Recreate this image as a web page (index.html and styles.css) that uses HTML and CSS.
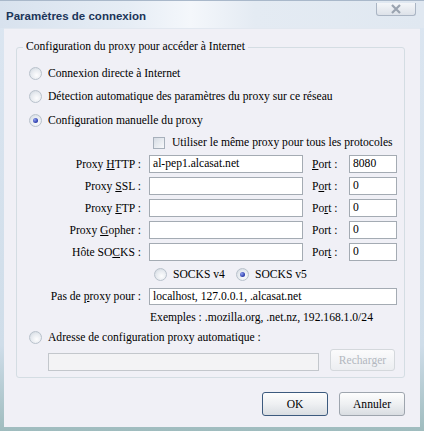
FILE: index.html
```html
<!DOCTYPE html>
<html lang="fr">
<head>
    <meta charset="UTF-8">
    <title>Paramètres de connexion</title>
    <link rel="stylesheet" href="styles.css">
</head>
<body>
<div class="window">
    <div class="titlebar">
        <span class="title">Paramètres de connexion</span>
        <span class="close">
            <svg width="14" height="10" viewBox="0 0 14 10"><path d="M3 1 L11 9 M11 1 L3 9" stroke="#9aa3b0" stroke-width="2.2" fill="none"/></svg>
        </span>
    </div>
    <div class="content">
        <fieldset class="group">
            <legend>Configuration du proxy pour accéder à Internet</legend>

            <div class="row r-a"><span class="radio"></span>Connexion directe à Internet</div>
            <div class="row r-b"><span class="radio"></span>Détection automatique des paramètres du proxy sur ce réseau</div>
            <div class="row r-c"><span class="radio checked"></span>Configuration manuelle du proxy</div>
            <div class="row r-check"><span class="checkbox"></span>Utiliser le même proxy pour tous les protocoles</div>

            <div class="row proxy-row">
                <span class="label">Proxy <u>H</u>TTP :</span>
                <span class="field host">al-pep1.alcasat.net</span>
                <span class="port-label"><u>P</u>ort :</span>
                <span class="field port">8080</span>
            </div>
            <div class="row proxy-row">
                <span class="label">Proxy <u>S</u>SL :</span>
                <span class="field host"></span>
                <span class="port-label">P<u>o</u>rt :</span>
                <span class="field port">0</span>
            </div>
            <div class="row proxy-row">
                <span class="label">Proxy <u>F</u>TP :</span>
                <span class="field host"></span>
                <span class="port-label">Po<u>r</u>t :</span>
                <span class="field port">0</span>
            </div>
            <div class="row proxy-row">
                <span class="label">Proxy <u>G</u>opher :</span>
                <span class="field host"></span>
                <span class="port-label">Port :</span>
                <span class="field port">0</span>
            </div>
            <div class="row proxy-row">
                <span class="label">Hôte SO<u>C</u>KS :</span>
                <span class="field host"></span>
                <span class="port-label">Por<u>t</u> :</span>
                <span class="field port">0</span>
            </div>

            <div class="row socks-row">
                <span class="socks-opt"><span class="radio"></span>SOCKS v4</span>
                <span class="socks-opt"><span class="radio checked"></span>SOCKS v5</span>
            </div>

            <div class="row noproxy-row">
                <span class="label">Pas de <u>p</u>roxy pour :</span>
                <span class="field wide">localhost, 127.0.0.1, .alcasat.net</span>
            </div>
            <div class="row examples">Exemples : .mozilla.org, .net.nz, 192.168.1.0/24</div>

            <div class="row r-auto"><span class="radio"></span>Adresse de configuration proxy automatique :</div>
            <div class="row auto-row">
                <span class="field auto disabled"></span>
                <span class="btn reload">Recharger</span>
            </div>
        </fieldset>

        <div class="actions">
            <span class="btn default">OK</span>
            <span class="btn">Annuler</span>
        </div>
    </div>
</div>
</body>
</html>
```

FILE: styles.css
```css
html, body { margin: 0; padding: 0; background: #fff; }
body { font-family: "Liberation Serif", "Times New Roman", serif; font-size: 11.6px; color: #000; }

.window { width: 424px; height: 431px; box-sizing: border-box; padding: 0 4px 4px; background: linear-gradient(to bottom, #dce6f1, #cfdde9 80%, #9fbcbe); border-top: 1px solid #a9b8ca; display: flex; flex-direction: column; }
.titlebar { height: 27px; display: flex; align-items: flex-start; justify-content: space-between; margin: 0 -4px; padding: 0 8px 0 6px; background: linear-gradient(to right, #d8e2ee 0%, #e6edf5 30%, #f4f7fb 45%, #e4ebf3 60%, #e0e8f1 100%); }
.title { font-family: "Liberation Sans", sans-serif; font-weight: bold; font-size: 11.5px; color: #1b3559; margin-top: 9px; }
.close { width: 40px; height: 13px; margin-top: 2px; box-sizing: border-box; border: 1px solid #aab5c4; border-top: none; border-radius: 0 0 3px 3px; background: linear-gradient(to bottom, #f4f6f9, #dde2e9); display: flex; align-items: center; justify-content: center; }

.content { flex: 1; background: #f0f0f6; padding: 11px 15px 0 12px; border-top: 1px solid #e2e8f0; }

.group { margin: 0; padding: 8px 0 6px; border: 1px solid #d4dde3; border-radius: 3px; min-width: 0; }
.group legend { margin-left: 6px; padding: 0 3px; line-height: 14px; }

.row { display: flex; align-items: center; white-space: nowrap; }
.r-a, .r-b { height: 23px; }
.r-c { height: 24px; }
.r-check { height: 21px; padding-left: 136px; }
.r-a, .r-b, .r-c, .r-auto { padding-left: 12px; }
.r-auto { height: 20px; }

.radio { width: 13px; height: 13px; box-sizing: border-box; border-radius: 50%; border: 1px solid #b9c2cc; background: radial-gradient(circle at 60% 65%, #fdfdfe 0%, #e6eaef 55%, #c9d1da 100%); margin-right: 6px; flex: none; position: relative; }
.radio.checked::after { content: ""; position: absolute; left: 3px; top: 3px; width: 5px; height: 5px; border-radius: 50%; background: radial-gradient(circle at 35% 35%, #8e9ef0, #2a3aa8 70%); }
.checkbox { width: 12px; height: 12px; box-sizing: border-box; border: 1px solid #a7b0bb; background: linear-gradient(135deg, #d6dce4, #f8f9fb); margin-right: 7px; flex: none; }

.proxy-row { height: 22px; }
.label { width: 124px; text-align: right; flex: none; margin-right: 8px; }
.field { height: 18px; box-sizing: border-box; border: 1px solid #a4abb3; background: #fff; padding: 0 3px; line-height: 16px; flex: none; }
.host { width: 154px; }
.port-label { width: 37px; margin-left: 9px; flex: none; }
.port { width: 48px; }

.socks-row { height: 22px; padding-left: 137px; }
.socks-opt { display: flex; align-items: center; width: 82px; }

.noproxy-row { height: 22px; }
.wide { width: 248px; height: 17px; line-height: 15px; }
.examples { height: 20px; padding-left: 133px; }

.auto-row { height: 22px; margin-top: 2px; align-items: flex-end; padding-left: 31px; }
.auto { width: 271px; }
.disabled { background: #f3f3f5; border-color: #c3c7cc; }

.btn { display: flex; align-items: center; justify-content: center; box-sizing: border-box; border: 1px solid #9ea5ae; border-radius: 3px; background: linear-gradient(to bottom, #fdfdfd 0%, #eef0f2 50%, #d9dde2 100%); }
.reload { width: 65px; height: 22px; margin-left: 11px; color: #b3b8bf; border-color: #d4d8dc; background: linear-gradient(to bottom, #fbfbfc, #eceef1); }

.actions { display: flex; justify-content: flex-end; gap: 11px; margin-top: 14px; }
.actions .btn { width: 66px; height: 24px; }
.actions .btn.default { border-color: #3c5a7e; }
```
